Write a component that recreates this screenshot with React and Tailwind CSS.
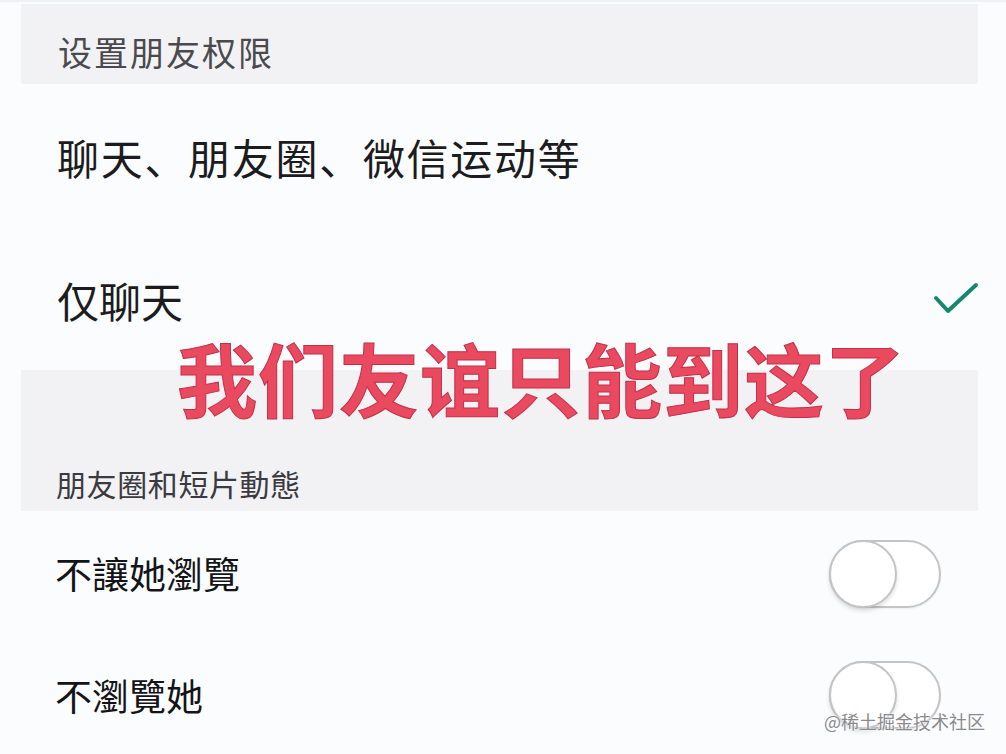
import React from "react";

const CJK = { fontFamily: '"Noto Sans CJK SC", "Noto Sans CJK TC", "Noto Sans", sans-serif' };

function Toggle() {
  return (
    <div className="ml-auto mr-[65px] w-[112px] h-[68px] rounded-full border-2 border-[#c4c4c6] bg-white relative shadow-[0_1px_2px_rgba(0,0,0,0.05)]">
      <div className="absolute left-[-2px] top-[-2px] w-[68px] h-[68px] rounded-full border-2 border-[#c4c4c6] bg-white shadow-[0_3px_4px_rgba(0,0,0,0.12)]" />
    </div>
  );
}

export default function App() {
  return (
    <div className="relative w-[1006px] h-[754px] overflow-hidden bg-[#fbfcfd]" style={CJK}>
      <div className="h-[2px] bg-[#eef0f3]" />
      <div className="h-[2px]" />
      {/* Header 1 */}
      <div className="ml-[21px] mr-[28px] h-[80px] bg-[#f2f2f4] rounded-b-[3px] pl-[37px] pt-[31px]">
        <div className="text-[34px] leading-none text-[#4a4a4e] tracking-[2px]">设置朋友权限</div>
      </div>
      {/* Row 1 */}
      <div className="h-[146px] flex items-center pl-[57px]">
        <div className="text-[42px] leading-none text-[#1c1c20] tracking-[1.7px]">聊天、朋友圈、微信运动等</div>
      </div>
      {/* Row 2 */}
      <div className="h-[140px] flex items-center pl-[57px]">
        <div className="text-[42px] leading-none text-[#1c1c20]">仅聊天</div>
        <svg className="ml-auto mr-[26px]" width="48" height="38" viewBox="0 0 48 38">
          <path d="M4 17 L16 30 L44 4" fill="none" stroke="#16876e" strokeWidth="4" strokeLinecap="round" strokeLinejoin="round" />
        </svg>
      </div>
      {/* Header 2 */}
      <div className="ml-[21px] mr-[28px] h-[141px] bg-[#f2f2f4] pl-[35px] flex items-end pb-[13px]">
        <div className="text-[30px] leading-none text-[#3a3a40] tracking-[0.6px]">朋友圈和短片動態</div>
      </div>
      {/* Row 3 */}
      <div className="h-[125px] flex items-center pl-[55px]">
        <div className="text-[37px] leading-none text-[#141418]">不讓她瀏覽</div>
        <Toggle />
      </div>
      {/* Row 4 */}
      <div className="h-[118px] flex items-center pl-[55px]">
        <div className="text-[37px] leading-none text-[#141418]">不瀏覽她</div>
        <Toggle />
      </div>

      {/* Overlay caption */}
      <div
        className="absolute left-[177px] top-[336px] text-[80px] leading-none font-bold tracking-[1px] text-[#e94a5f] [-webkit-text-stroke:1px_#c42f48] whitespace-nowrap"
      >
        我们友谊只能到这了
      </div>

      {/* Watermark */}
      <div className="absolute left-[824px] top-[712px] text-[18px] leading-none text-[#8a8a8e] [text-shadow:0_0_2px_#fff,0_0_2px_#fff] whitespace-nowrap">
        @稀土掘金技术社区
      </div>
    </div>
  );
}
